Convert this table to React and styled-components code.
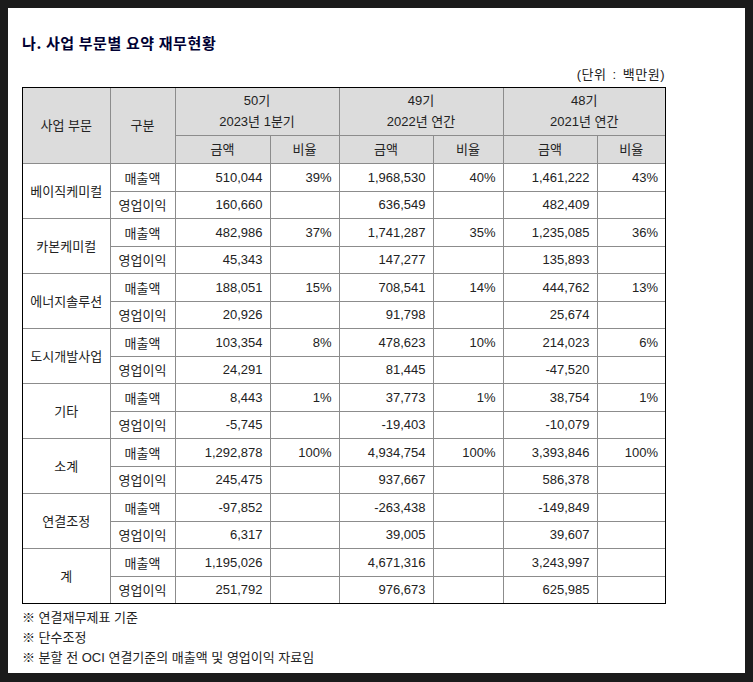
import styled, { createGlobalStyle } from 'styled-components';

const GlobalStyle = createGlobalStyle`
  html, body {
    margin: 0;
    padding: 0;
    background: #1b1b1b;
  }
  body {
    font-family: "Liberation Sans", "Noto Sans CJK KR", sans-serif;
  }
`;

const Panel = styled.div`
  margin: 8px;
  width: 737px;
  height: 665px;
  background: #ffffff;
  box-sizing: border-box;
  padding: 24px 79px 0 14px;
  color: #222;
`;

const Title = styled.h2`
  margin: 0;
  font-family: "Noto Sans CJK KR", sans-serif;
  font-size: 15px;
  font-weight: 700;
  color: #000033;
  line-height: 22px;
  letter-spacing: 0.6px;
`;

const Unit = styled.div`
  margin-top: 12px;
  text-align: right;
  font-size: 13px;
  line-height: 18px;
  padding-right: 1px;
  letter-spacing: 0.5px;
  word-spacing: 2px;
`;

const TableFrame = styled.div`
  margin-top: 3px;
  width: 644px;
  box-sizing: border-box;
  border: 1px solid #000;
`;

const Table = styled.table`
  width: 642px;
  border-collapse: collapse;
  table-layout: fixed;
  border-style: hidden;
  font-size: 13px;
`;

const HeadCell = styled.th`
  background: #dcdcdc;
  font-weight: 400;
  border: 1px solid #8c8c8c;
  text-align: center;
  padding: 0;
  line-height: 21px;
  color: #222;
`;

const Cell = styled.td`
  border: 1px solid #8c8c8c;
  padding: ${(p) => (p.$num ? '0 7px 0 0' : '0')};
  text-align: ${(p) => (p.$num ? 'right' : 'center')};
  white-space: nowrap;
`;

const Row = styled.tr`
  height: ${(p) => p.$h}px;
`;

const Notes = styled.div`
  margin-top: 4px;
  font-size: 13px;
  line-height: 20px;
`;

const segments = [
  { name: '베이직케미컬', sales: ['510,044', '39%', '1,968,530', '40%', '1,461,222', '43%'], op: ['160,660', '636,549', '482,409'] },
  { name: '카본케미컬', sales: ['482,986', '37%', '1,741,287', '35%', '1,235,085', '36%'], op: ['45,343', '147,277', '135,893'] },
  { name: '에너지솔루션', sales: ['188,051', '15%', '708,541', '14%', '444,762', '13%'], op: ['20,926', '91,798', '25,674'] },
  { name: '도시개발사업', sales: ['103,354', '8%', '478,623', '10%', '214,023', '6%'], op: ['24,291', '81,445', '-47,520'] },
  { name: '기타', sales: ['8,443', '1%', '37,773', '1%', '38,754', '1%'], op: ['-5,745', '-19,403', '-10,079'] },
  { name: '소계', sales: ['1,292,878', '100%', '4,934,754', '100%', '3,393,846', '100%'], op: ['245,475', '937,667', '586,378'] },
  { name: '연결조정', sales: ['-97,852', '', '-263,438', '', '-149,849', ''], op: ['6,317', '39,005', '39,607'] },
  { name: '계', sales: ['1,195,026', '', '4,671,316', '', '3,243,997', ''], op: ['251,792', '976,673', '625,985'] },
];

const periods = [
  ['50기', '2023년 1분기'],
  ['49기', '2022년 연간'],
  ['48기', '2021년 연간'],
];

const widths = [87, 65, 95, 69, 94, 70, 94, 68];

export default function App() {
  return (
    <>
      <GlobalStyle />
      <Panel>
        <Title>나. 사업 부문별 요약 재무현황</Title>
        <Unit>(단위 : 백만원)</Unit>
        <TableFrame>
          <Table>
            <colgroup>
              {widths.map((w, i) => (
                <col key={i} style={{ width: w }} />
              ))}
            </colgroup>
            <thead>
              <Row $h={47}>
                <HeadCell rowSpan={2}>사업 부문</HeadCell>
                <HeadCell rowSpan={2}>구분</HeadCell>
                {periods.map(([a, b]) => (
                  <HeadCell key={a} colSpan={2}>
                    {a}
                    <br />
                    {b}
                  </HeadCell>
                ))}
              </Row>
              <Row $h={28}>
                {periods.map(([a]) => [
                  <HeadCell key={a + 'a'}>금액</HeadCell>,
                  <HeadCell key={a + 'r'}>비율</HeadCell>,
                ])}
              </Row>
            </thead>
            <tbody>
              {segments.map((s) => [
                <Row key={s.name + 's'} $h={28}>
                  <Cell rowSpan={2}>{s.name}</Cell>
                  <Cell>매출액</Cell>
                  {s.sales.map((v, i) => (
                    <Cell key={i} $num>
                      {v}
                    </Cell>
                  ))}
                </Row>,
                <Row key={s.name + 'o'} $h={27}>
                  <Cell>영업이익</Cell>
                  {s.op.map((v, i) => [
                    <Cell key={i + 'v'} $num>
                      {v}
                    </Cell>,
                    <Cell key={i + 'e'} $num />,
                  ])}
                </Row>,
              ])}
            </tbody>
          </Table>
        </TableFrame>
        <Notes>
          <div>※ 연결재무제표 기준</div>
          <div>※ 단수조정</div>
          <div>※ 분할 전 OCI 연결기준의 매출액 및 영업이익 자료임</div>
        </Notes>
      </Panel>
    </>
  );
}
